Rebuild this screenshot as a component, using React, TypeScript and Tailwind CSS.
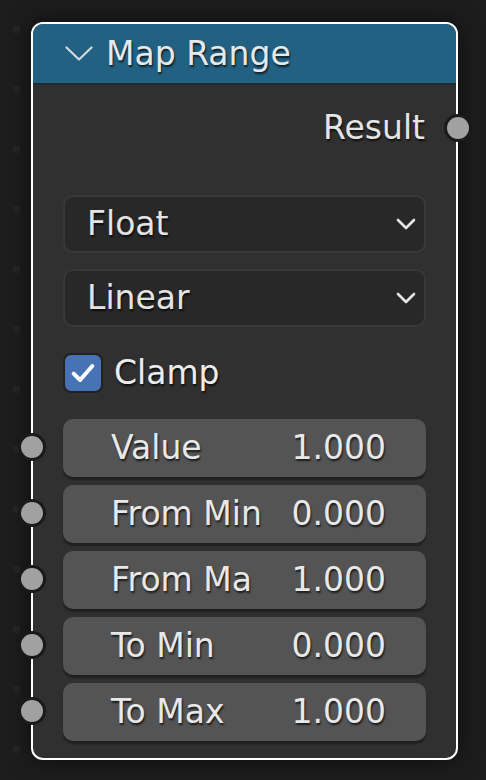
const font = { fontFamily: '"DejaVu Sans", "Liberation Sans", sans-serif' };

const sockets = [
  { label: 'Value', value: '1.000' },
  { label: 'From Min', value: '0.000' },
  { label: 'From Ma', value: '1.000' },
  { label: 'To Min', value: '0.000' },
  { label: 'To Max', value: '1.000' },
];

const shadowText = '[text-shadow:1px_2px_2px_rgba(0,0,0,0.7)]';

function Socket() {
  return <div className="h-[28px] w-[28px] rounded-full border-[3px] border-[#1a1a1a] bg-[#a1a1a1]" />;
}

function Chevron({ className }: { className?: string }) {
  return (
    <svg viewBox="0 0 20 12" className={className} fill="none">
      <path d="M2 2 L10 10 L18 2" stroke="currentColor" strokeWidth="2.6" strokeLinecap="round" strokeLinejoin="round" />
    </svg>
  );
}

function Dropdown({ label }: { label: string }) {
  return (
    <div className="flex h-[58px] items-center justify-between rounded-[10px] border-2 border-[#383838] bg-[#282828] pl-[22px] pr-[8px] text-[33px] text-[#e4e4e4]">
      <span className={shadowText}>{label}</span>
      <Chevron className="h-[12px] w-[20px] text-[#e6e6e6]" />
    </div>
  );
}

export default function App() {
  return (
    <div className="relative h-[780px] w-[486px] overflow-hidden bg-[#1d1d1d]" style={font}>
      {/* canvas grid dots */}
      <div className="absolute left-[13px] top-[26px] flex flex-col gap-[53px]">
        {Array.from({ length: 13 }).map((_, i) => (
          <div key={i} className="h-[7px] w-[7px] bg-[#252525]" />
        ))}
      </div>

      <div className="relative pl-[31px] pt-[22px]">
        <div className="relative flex h-[738px] w-[427px] flex-col overflow-hidden rounded-[12px] border-2 border-white bg-[#303030] shadow-[0_0_24px_rgba(0,0,0,0.6)]">
          {/* header */}
          <div className="flex h-[61px] shrink-0 items-center gap-[13px] border-b-2 border-[#1f2a30] bg-[#236182] pl-[32px] text-[33px] text-[#e8e8e8]">
            <svg viewBox="0 0 28 15" className="h-[15px] w-[28px]" fill="none">
              <path d="M1.5 1.5 L14 13.5 L26.5 1.5" stroke="#cfd9df" strokeWidth="2.2" strokeLinecap="round" strokeLinejoin="round" />
            </svg>
            <span className={shadowText}>Map Range</span>
          </div>

          {/* output */}
          <div className="mt-[23px] flex h-[40px] items-center justify-end pr-[31px] text-[33px] text-[#e4e4e4]">
            <span className={shadowText}>Result</span>
          </div>

          <div className="mt-[47px] flex flex-col px-[30px]">
            <Dropdown label="Float" />
            <div className="mt-[16px]">
              <Dropdown label="Linear" />
            </div>

            <div className="mt-[26px] flex h-[40px] items-center gap-[11px]">
              <div className="flex h-[40px] w-[40px] items-center justify-center rounded-[8px] border-2 border-[#222] bg-[#4772b3]">
                <svg viewBox="0 0 24 24" className="h-[28px] w-[28px]" fill="none">
                  <path d="M4 12.5 L9.5 18 L20 6" stroke="white" strokeWidth="3.4" strokeLinecap="round" strokeLinejoin="round" />
                </svg>
              </div>
              <span className={`text-[33px] text-[#ececec] ${shadowText}`}>Clamp</span>
            </div>

            <div className="mt-[26px] flex flex-col gap-[8px]">
              {sockets.map((s) => (
                <div
                  key={s.label}
                  className="flex h-[58px] items-center justify-between rounded-[10px] bg-[#545454] pl-[48px] pr-[40px] text-[33px] text-[#e8e8e8] shadow-[0_3px_2px_rgba(0,0,0,0.35)]"
                >
                  <span className={shadowText}>{s.label}</span>
                  <span className={shadowText}>{s.value}</span>
                </div>
              ))}
            </div>
          </div>
        </div>

        {/* sockets over the node border */}
        <div className="absolute right-[14px] top-[114px]">
          <Socket />
        </div>
        <div className="absolute left-[18px] top-[433px] flex flex-col gap-[38px]">
          {sockets.map((s) => (
            <Socket key={s.label} />
          ))}
        </div>
      </div>
    </div>
  );
}
